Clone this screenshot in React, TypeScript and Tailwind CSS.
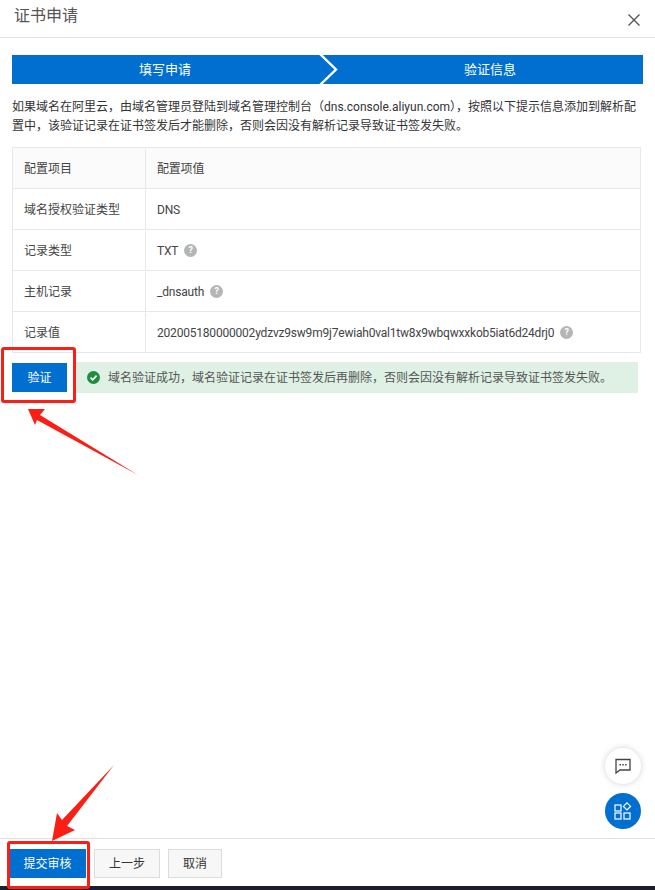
const FONT = "font-['Roboto','Noto_Sans_CJK_SC',sans-serif]"

function HelpIcon() {
  return (
    <span className="ml-[6px] inline-flex h-[13px] w-[13px] items-center justify-center rounded-full bg-[#b5b5b5] text-[9px] font-bold leading-none text-white">
      ?
    </span>
  )
}

const rows = [
  { label: '配置项目', value: '配置项值', help: false, head: true },
  { label: '域名授权验证类型', value: 'DNS', help: false, head: false },
  { label: '记录类型', value: 'TXT', help: true, head: false },
  { label: '主机记录', value: '_dnsauth', help: true, head: false },
  { label: '记录值', value: '202005180000002ydzvz9sw9m9j7ewiah0val1tw8x9wbqwxxkob5iat6d24drj0', help: true, head: false },
]

function StepBar() {
  return (
    <div className="relative flex h-[29px] bg-[#006fcf] text-[13px] text-white">
      <div className="flex w-[306px] items-center justify-center">填写申请</div>
      <div className="flex flex-1 items-center justify-center pl-[19px]">验证信息</div>
      <svg className="absolute left-[306px] top-0" width="22" height="29" viewBox="0 0 22 29">
        <path d="M2 -1 L18 14.5 L2 30" fill="none" stroke="#ffffff" strokeWidth="2.4" />
      </svg>
    </div>
  )
}

function ConfigTable() {
  return (
    <div className="border-x border-t border-[#e8e8e8] text-[12px] text-[#444]">
      {rows.map((row) => (
        <div key={row.label} className={`flex h-[41px] border-b border-[#e8e8e8] pt-[1px] ${row.head ? 'bg-[#fbfbfb]' : 'bg-white'}`}>
          <div className="flex w-[133px] items-center border-r border-[#e8e8e8] pl-[11px]">{row.label}</div>
          <div className="flex flex-1 items-center whitespace-nowrap pl-[11px] tracking-[-0.2px]">
            {row.value}
            {row.help && <HelpIcon />}
          </div>
        </div>
      ))}
    </div>
  )
}

function Annotations() {
  return (
    <>
      <div className="absolute left-[1px] top-[347px] h-[56px] w-[75px] rounded-[3px] border-[3px] border-[#fa1e14]" />
      <div className="absolute left-[7px] top-[841px] h-[48px] w-[83px] rounded-[3px] border-[3px] border-[#fa1e14]" />
      <svg className="absolute left-0 top-0" width="655" height="890" viewBox="0 0 655 890">
        <path d="M28 409 L45 409 L40 415 L138 475 L37 420 L35 425 Z" fill="#fa1e14" />
        <path d="M114 765 L67 826 L75 830 L52 841 L57 813 L62 820 Z" fill="#fa1e14" />
      </svg>
    </>
  )
}

export default function App() {
  return (
    <div className={`relative flex h-[890px] w-[655px] flex-col overflow-hidden bg-white ${FONT}`}>
      <header className="flex h-[38px] items-center justify-between border-b border-[#e2e2e2] pl-[14px] pr-[14px]">
        <h1 className="mb-[5px] text-[16px] font-normal text-[#555]">证书申请</h1>
        <svg className="mt-[3px]" width="14" height="14" viewBox="0 0 14 14">
          <path d="M1.5 1.5 L12.5 12.5 M12.5 1.5 L1.5 12.5" stroke="#555" strokeWidth="1.4" />
        </svg>
      </header>

      <main className="flex-1 px-[12px] pt-[17px]">
        <StepBar />
        <p className="mt-[14px] h-[49px] w-[632px] text-[12px] leading-[19px] text-[#333]">
          如果域名在阿里云，由域名管理员登陆到域名管理控制台（dns.console.aliyun.com），按照以下提示信息添加到解析配置中，该验证记录在证书签发后才能删除，否则会因没有解析记录导致证书签发失败。
        </p>
        <div className="w-[629px]">
          <ConfigTable />
        </div>
        <div className="mt-[9px] flex w-[626px] items-center gap-[9px]">
          <button className="h-[29px] w-[55px] bg-[#006fcf] text-[12px] text-white">验证</button>
          <div className="flex h-[31px] flex-1 items-center bg-[#dff1e5] pl-[11px] text-[12px] text-[#555]">
            <svg className="mr-[8px] shrink-0" width="13" height="13" viewBox="0 0 14 14">
              <circle cx="7" cy="7" r="7" fill="#1e8e3e" />
              <path d="M3.8 7.2 L6.2 9.5 L10.3 5" fill="none" stroke="#fff" strokeWidth="1.8" />
            </svg>
            域名验证成功，域名验证记录在证书签发后再删除，否则会因没有解析记录导致证书签发失败。
          </div>
        </div>
      </main>

      <div className="absolute right-[14px] top-[748px] flex flex-col gap-[9px]">
        <button className="flex h-[36px] w-[36px] items-center justify-center rounded-full bg-white shadow-[0_0_6px_rgba(0,0,0,0.18)]">
          <svg width="18" height="18" viewBox="0 0 18 18">
            <path d="M2 2.5 H16 V13 H6 L2 16 Z" fill="none" stroke="#444" strokeWidth="1.3" />
            <path d="M5.5 7.8 H7 M8.3 7.8 H9.8 M11.1 7.8 H12.6" stroke="#444" strokeWidth="1.5" />
          </svg>
        </button>
        <button className="flex h-[36px] w-[36px] items-center justify-center rounded-full bg-[#006fcf]">
          <svg width="18" height="18" viewBox="0 0 18 18" fill="none" stroke="#fff" strokeWidth="1.2">
            <rect x="1" y="3" width="6" height="6" />
            <rect x="1" y="11" width="6" height="6" />
            <rect x="10" y="11" width="6" height="6" />
            <path d="M13 0.8 L16.6 4.4 L13 8 L9.4 4.4 Z" />
          </svg>
        </button>
      </div>

      <footer className="flex h-[48px] items-start gap-[8px] border-t border-[#e2e2e2] pl-[9px] pt-[10px] text-[12px]">
        <button className="h-[29px] w-[77px] bg-[#006fcf] text-white">提交审核</button>
        <button className="h-[29px] w-[66px] border border-[#dcdcdc] bg-[#f7f7f7] text-[#333]">上一步</button>
        <button className="h-[29px] w-[54px] border border-[#dcdcdc] bg-[#f7f7f7] text-[#333]">取消</button>
      </footer>
      <div className="h-[4px] bg-[#1b1f2b]" />

      <Annotations />
    </div>
  )
}
